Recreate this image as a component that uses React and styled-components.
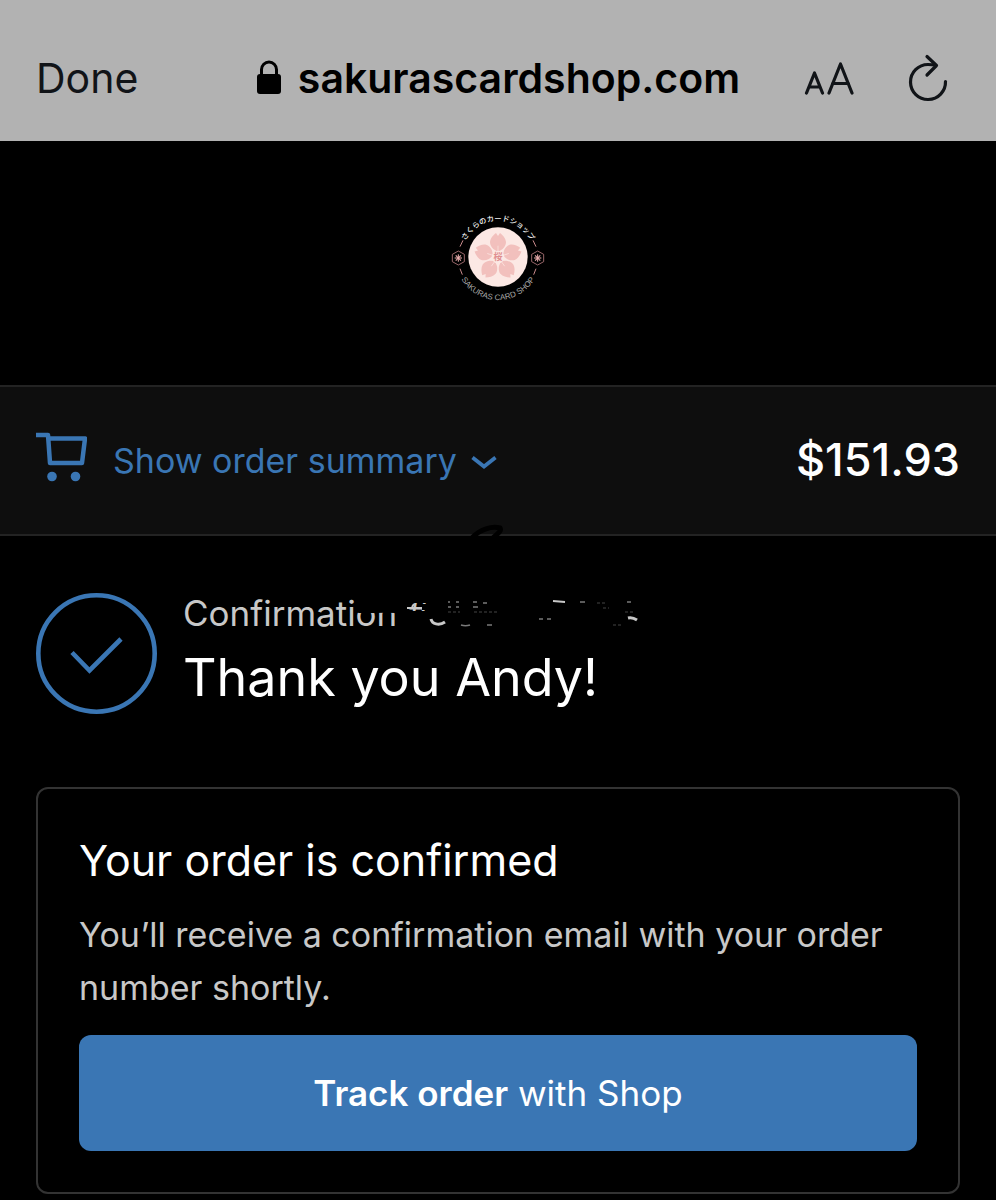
import React, { useState } from "react";
import styled, { createGlobalStyle } from "styled-components";

const ColorPalette = {
  black: "#000000",
  white: "#ffffff",
  accent: "#3a76b4",
  toolbar: "#b2b2b2",
  ink: "#111418",
  bar: "#0e0e0e",
  barBorder: "#232323",
  cardBorder: "#333333",
  muted: "#c8c8c8",
  petal: "#f2c0bd",
  blossom: "#fce8e4"
};

const GlobalStyle = createGlobalStyle`
  * {
    box-sizing: border-box;
  }

  body {
    margin: 0;
    background-color: ${ColorPalette.black};
    color: ${ColorPalette.white};
    font-family: Inter, "Noto Sans CJK JP", sans-serif;
  }

  h1, h2, p {
    margin: 0;
    font-weight: 400;
  }

  button {
    border: 0;
    padding: 0;
    background: none;
    color: inherit;
    font: inherit;
    cursor: pointer;
  }

  svg {
    display: block;
    flex-shrink: 0;
  }
`;

const Toolbar = styled.header`
  display: grid;
  grid-template-columns: 1fr auto 1fr;
  align-items: center;
  height: 141px;
  padding-top: 14px;
  background-color: ${ColorPalette.toolbar};
  color: ${ColorPalette.ink};
`;

const DoneButton = styled.button`
  justify-self: start;
  padding-left: 36px;
  font-size: 41px;
  line-height: 48px;
`;

const Address = styled.div`
  display: flex;
  align-items: center;
  gap: 16px;
  color: ${ColorPalette.black};
  font-size: 41px;
  font-weight: 600;
  line-height: 48px;
`;

const ToolbarActions = styled.div`
  display: flex;
  align-items: center;
  justify-self: end;
  gap: 54px;
  padding-right: 48px;
`;

const Brand = styled.div`
  display: flex;
  justify-content: center;
  padding: 66px 0 78px;
`;

const SummaryBar = styled.section`
  position: relative;
  display: flex;
  align-items: center;
  justify-content: space-between;
  height: 151px;
  padding: 0 36px;
  background-color: ${ColorPalette.bar};
  border-top: 2px solid ${ColorPalette.barBorder};
  border-bottom: 2px solid ${ColorPalette.barBorder};
`;

const SummaryToggle = styled.button`
  display: flex;
  align-items: center;
  color: ${ColorPalette.accent};
  font-size: 34px;
  line-height: 48px;
`;

const SummaryLabel = styled.span`
  margin: 0 14px 0 26px;
`;

const Total = styled.span`
  padding-bottom: 2px;
  font-size: 45px;
  font-weight: 500;
  line-height: 52px;
`;

const BarStroke = styled.svg`
  position: absolute;
  left: 468px;
  bottom: -6px;
`;

const Content = styled.main`
  padding: 57px 36px 6px;
`;

const Greeting = styled.div`
  display: flex;
  gap: 26px;
  margin-bottom: 73px;
`;

const Confirmation = styled.p`
  position: relative;
  color: ${ColorPalette.muted};
  font-size: 35px;
  line-height: 40px;
`;

const Redaction = styled.svg`
  position: absolute;
  left: 157px;
  top: 0;
`;

const Heading = styled.h1`
  padding-top: 10px;
  font-size: 52px;
  line-height: 70px;
`;

const Card = styled.section`
  padding: 41px;
  border: 2px solid ${ColorPalette.cardBorder};
  border-radius: 12px;
`;

const CardTitle = styled.h2`
  font-size: 43px;
  line-height: 60px;
`;

const CardText = styled.p`
  margin: 18px 0 21px;
  color: ${ColorPalette.muted};
  font-size: 34px;
  line-height: 53px;
`;

const TrackButton = styled.button`
  display: block;
  width: 100%;
  height: 116px;
  border-radius: 12px;
  background-color: ${ColorPalette.accent};
  color: ${ColorPalette.white};
  font-size: 35px;
  line-height: 48px;
`;

const Strong = styled.strong`
  font-weight: 600;
`;

const LockIcon = () => (
  <svg width="26" height="36" viewBox="0 0 26 36" aria-hidden="true">
    <rect x="1" y="14" width="24" height="20" rx="3" fill="currentColor" />
    <path
      d="M5.5 16V9.5a7.5 7.5 0 0 1 15 0V16"
      fill="none"
      stroke="currentColor"
      strokeWidth="3"
    />
  </svg>
);

const TextSizeIcon = () => (
  <svg
    width="50"
    height="34"
    viewBox="0 0 50 34"
    fill="none"
    stroke="currentColor"
    strokeWidth="3.2"
    strokeLinecap="round"
    strokeLinejoin="round"
    aria-hidden="true"
  >
    <path d="M2.5 32 10.5 12 18.5 32M5 26h11" />
    <path d="M25 32 36.5 3 48 32M28.5 22.5h16" />
  </svg>
);

const ReloadIcon = () => (
  <svg
    width="40"
    height="48"
    viewBox="0 0 40 48"
    fill="none"
    stroke="currentColor"
    strokeWidth="3.2"
    strokeLinecap="round"
    strokeLinejoin="round"
    aria-hidden="true"
  >
    <path d="M37.5 27.5A17.5 17.5 0 1 1 20 10.5c3 0 5.5.3 7.5.8" />
    <path d="M19 2.5 28.5 11.5 19 21" />
  </svg>
);

const CartIcon = () => (
  <svg width="51" height="58" viewBox="0 0 51 58" aria-hidden="true">
    <path
      d="M0 3h12l2 28h32l3-24.5H12.5"
      fill="none"
      stroke="currentColor"
      strokeWidth="4.5"
      strokeLinejoin="round"
    />
    <circle cx="16" cy="44.5" r="4.8" fill="currentColor" />
    <circle cx="39.5" cy="44.5" r="4.8" fill="currentColor" />
  </svg>
);

const ChevronIcon = () => (
  <svg width="26" height="16" viewBox="0 0 26 16" aria-hidden="true">
    <path
      d="M1.5 4.5 13 13.5 24.5 4.5"
      fill="none"
      stroke="currentColor"
      strokeWidth="3.8"
    />
  </svg>
);

const CheckIcon = () => (
  <svg
    width="121"
    height="121"
    viewBox="0 0 121 121"
    fill="none"
    stroke={ColorPalette.accent}
    aria-hidden="true"
  >
    <circle cx="60.5" cy="60.5" r="58.2" strokeWidth="4.6" />
    <path d="M36 59.5 53.5 77.5 85 46" strokeWidth="4.6" />
  </svg>
);

const petalAngles = [0, 72, 144, 216, 288];
const rayAngles = [0, 45, 90, 135];

const Logo = () => (
  <svg
    width="100"
    height="100"
    viewBox="-150 -150 300 300"
    role="img"
    aria-label="Sakuras Card Shop"
  >
    <defs>
      <path id="arc-top" d="M-109 0A109 109 0 0 1 109 0" />
      <path id="arc-bottom" d="M-129 0A129 129 0 0 0 129 0" />
    </defs>
    <circle r="89" fill={ColorPalette.blossom} />
    {petalAngles.map(angle => (
      <path
        key={angle}
        d="M0-15L-14-24C-20-30-24-37-24-45C-23-56-14-66-6-72L0-63L6-72C14-66 23-56 24-45C24-37 20-30 14-24Z"
        fill={ColorPalette.petal}
        transform={`rotate(${angle})`}
      />
    ))}
    {petalAngles.map(angle => (
      <path
        key={angle}
        d="M0-18V-34"
        stroke={ColorPalette.blossom}
        strokeWidth="2"
        transform={`rotate(${angle})`}
      />
    ))}
    <circle r="19" fill={ColorPalette.blossom} />
    <text
      y="10"
      textAnchor="middle"
      fontSize="27"
      fontWeight="700"
      fontFamily="Noto Sans CJK JP"
      fill="#e08f90"
    >
      桜
    </text>
    <text
      textAnchor="middle"
      fontSize="22"
      fontWeight="500"
      fontFamily="Noto Sans CJK JP"
      fill="#f4f4f4"
    >
      <textPath href="#arc-top" startOffset="50%">
        さくらのカードショップ
      </textPath>
    </text>
    <text
      textAnchor="middle"
      fontSize="24"
      fontFamily="Liberation Sans"
      fill="#a8a8a8"
    >
      <textPath href="#arc-bottom" startOffset="50%">
        SAKURAS CARD SHOP
      </textPath>
    </text>
    {[-119, 119].map(x => (
      <g key={x} transform={`translate(${x} 3)`} fill="none">
        <path
          d="M0-21 18-11V11L0 21-18 11V-11Z"
          stroke="#b77b7e"
          strokeWidth="2.5"
        />
        {rayAngles.map(angle => (
          <path
            key={angle}
            d="M0-11V11"
            stroke="#eeb0b0"
            strokeWidth="3"
            transform={`rotate(${angle})`}
          />
        ))}
      </g>
    ))}
    <path
      d="M-114-31-105-50M114-31 105-50M-114 35-107 53M114 35 107 53"
      stroke="#c98a8c"
      strokeWidth="3"
    />
  </svg>
);

// Marker strokes that black out the confirmation number
const RedactionMarks = () => (
  <Redaction width="310" height="40" viewBox="0 0 310 40" aria-hidden="true">
    <path
      d="M16 16.5C24 18 40 16 56 17M32 9H58M66 7H96M66 21H96M66 27H96M66 32H96M82 14H96"
      fill="none"
      stroke={ColorPalette.black}
      strokeWidth="6"
    />
    <g fill="none" stroke={ColorPalette.muted}>
      <path d="M91 26C92 31 99 33 105 29" strokeWidth="3" />
      <path d="M67 15h10M72 14l2-3" strokeWidth="2" />
      <path d="M288 25c4-1 6 0 9 2" strokeWidth="3" />
      <path d="M213 8 225 9" strokeWidth="2" />
    </g>
    <g fill="none" stroke="#7a7a7a" strokeWidth="1.5">
      <path d="M108 9h2M116 9h3M133 9h4M143 10h4M240 9h5M287 9h4" />
      <path d="M108 14h3M116 14h3M133 14h5" />
      <path d="M121 32c3 1 6 1 9 0M147 32h5M199 26h4M207 26h4" />
    </g>
    <path
      d="M108 19h12M134 19h24M257 10h8M263 15h6M285 19h8M273 32h8"
      stroke="#222222"
      strokeWidth="2"
      strokeDasharray="3 2"
    />
  </Redaction>
);

export default function App() {
  const [expanded, setExpanded] = useState(false);

  return (
    <>
      <GlobalStyle />
      <Toolbar>
        <DoneButton type="button">Done</DoneButton>
        <Address>
          <LockIcon />
          <span>sakurascardshop.com</span>
        </Address>
        <ToolbarActions>
          <button type="button" aria-label="Text size">
            <TextSizeIcon />
          </button>
          <button type="button" aria-label="Reload">
            <ReloadIcon />
          </button>
        </ToolbarActions>
      </Toolbar>
      <Brand>
        <Logo />
      </Brand>
      <SummaryBar>
        <SummaryToggle
          type="button"
          aria-expanded={expanded}
          onClick={() => setExpanded(!expanded)}
        >
          <CartIcon />
          <SummaryLabel>Show order summary</SummaryLabel>
          <ChevronIcon />
        </SummaryToggle>
        <Total>$151.93</Total>
        <BarStroke width="38" height="16" viewBox="0 0 38 16" aria-hidden="true">
          <path
            d="M4 14C12 5 24 2 32 4C34 7 29 10 25 14"
            fill="none"
            stroke={ColorPalette.black}
            strokeWidth="5"
            strokeLinecap="round"
          />
        </BarStroke>
      </SummaryBar>
      <Content>
        <Greeting>
          <CheckIcon />
          <div>
            <Confirmation>
              Confirmation #
              <RedactionMarks />
            </Confirmation>
            <Heading>Thank you Andy!</Heading>
          </div>
        </Greeting>
        <Card>
          <CardTitle>Your order is confirmed</CardTitle>
          <CardText>
            You’ll receive a confirmation email with your order number shortly.
          </CardText>
          <TrackButton type="button">
            <Strong>Track order</Strong> with Shop
          </TrackButton>
        </Card>
      </Content>
    </>
  );
}
